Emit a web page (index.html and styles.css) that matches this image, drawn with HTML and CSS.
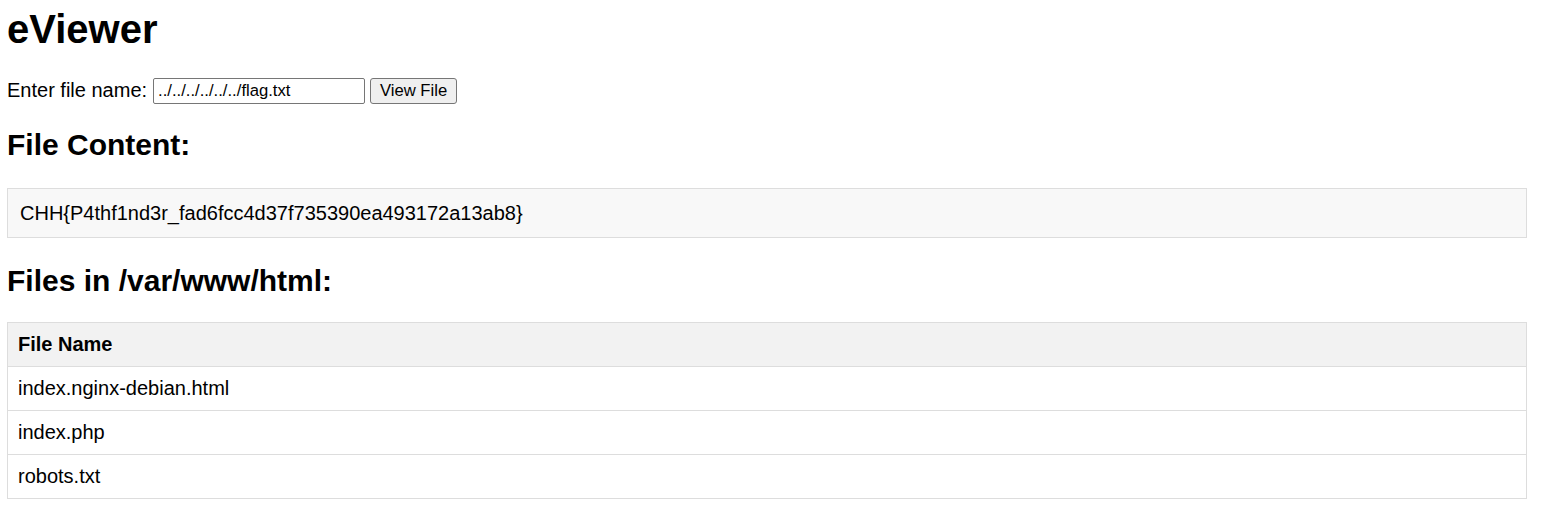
FILE: index.html
```html
<!DOCTYPE html>
<html lang="en">
<head>
<meta charset="utf-8">
<title>eViewer</title>
<link rel="stylesheet" href="styles.css">
</head>
<body>
<main class="page">
  <h1 class="title">eViewer</h1>
  <form class="file-form">
    <label class="file-label" for="file">Enter file name:</label>
    <input class="file-input" id="file" type="text" value="../../../../../../flag.txt">
    <button class="file-button" type="button">View File</button>
  </form>
  <h2 class="section-title content-title">File Content:</h2>
  <div class="content-box">CHH{P4thf1nd3r_fad6fcc4d37f735390ea493172a13ab8}</div>
  <h2 class="section-title files-title">Files in /var/www/html:</h2>
  <table class="file-table">
    <thead>
      <tr><th>File Name</th></tr>
    </thead>
    <tbody>
      <tr><td>index.nginx-debian.html</td></tr>
      <tr><td>index.php</td></tr>
      <tr><td>robots.txt</td></tr>
    </tbody>
  </table>
</main>
</body>
</html>
```

FILE: styles.css
```css
html, body {
  margin: 0;
  padding: 0;
  background: #ffffff;
}

body {
  font-family: "Liberation Sans", Arial, sans-serif;
  font-size: 20px;
  color: #000000;
}

.page {
  width: 1520px;
  padding: 0 0 0 7px;
  display: flow-root;
}

.title {
  font-size: 40px;
  font-weight: bold;
  line-height: 46px;
  margin: 6px 0 0 0;
}

.file-form {
  display: flex;
  align-items: center;
  height: 26px;
  margin: 26px 0 0 0;
}

.file-label {
  font-size: 20px;
  line-height: 23px;
  margin: 0 6px 2px 0;
}

.file-input {
  box-sizing: border-box;
  width: 212px;
  height: 26px;
  margin: 0 5px 0 0;
  padding: 1px 4px;
  border: 1px solid #767676;
  border-radius: 2px;
  background: #ffffff;
  font-family: "Liberation Sans", Arial, sans-serif;
  font-size: 16.67px;
  color: #000000;
}

.file-button {
  box-sizing: border-box;
  width: 87px;
  height: 26px;
  margin: 0;
  padding: 0;
  border: 1px solid #767676;
  border-radius: 3px;
  background: #efefef;
  font-family: "Liberation Sans", Arial, sans-serif;
  font-size: 16.67px;
  color: #000000;
}

.section-title {
  font-size: 30px;
  font-weight: bold;
  line-height: 34px;
  margin: 0;
}

.content-title {
  margin-top: 24px;
}

.content-box {
  box-sizing: border-box;
  margin-top: 26px;
  height: 50px;
  padding: 12px 12px;
  border: 1px solid #dddddd;
  background: #f8f8f8;
  font-size: 20px;
  line-height: 24px;
}

.files-title {
  margin-top: 26px;
}

.file-table {
  margin-top: 24px;
  width: 1520px;
  border-collapse: collapse;
}

.file-table th,
.file-table td {
  border: 1px solid #dddddd;
  padding: 10px 10px;
  text-align: left;
  font-size: 20px;
  line-height: 23px;
  height: 23px;
}

.file-table th {
  background: #f2f2f2;
  font-weight: bold;
}
```
